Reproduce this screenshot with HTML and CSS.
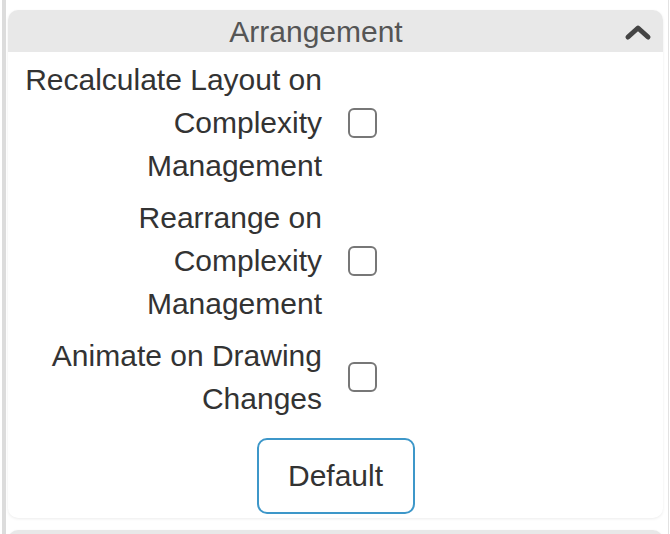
FILE: index.html
```html
<!DOCTYPE html>
<html>
<head>
<meta charset="utf-8">
<link rel="stylesheet" href="styles.css">
</head>
<body>
<div class="frame">
  <div class="card">
    <div class="card-header">
      <span class="title">Arrangement</span>
      <span class="toggle">
        <svg class="chevron" width="28" height="18" viewBox="0 0 28 18"><polyline points="4,14 14,5 24,14" fill="none" stroke="#444" stroke-width="5" stroke-linecap="round" stroke-linejoin="round"/></svg>
      </span>
    </div>
    <div class="card-body">
      <div class="row">
        <label class="label">Recalculate Layout on Complexity Management</label>
        <input type="checkbox" class="check">
      </div>
      <div class="row">
        <label class="label">Rearrange on Complexity Management</label>
        <input type="checkbox" class="check">
      </div>
      <div class="row">
        <label class="label">Animate on Drawing Changes</label>
        <input type="checkbox" class="check">
      </div>
      <div class="actions">
        <button class="btn">Default</button>
      </div>
    </div>
  </div>
  <div class="card next">
    <div class="card-header"></div>
  </div>
</div>
</body>
</html>
```

FILE: styles.css
```css
html, body {
  margin: 0;
  padding: 0;
  background: #fff;
  overflow: hidden;
}
body {
  font-family: "Liberation Sans", Arial, Helvetica, sans-serif;
  color: #333;
}
.frame {
  box-sizing: border-box;
  height: 534px;
  margin: 0 1px 0 2px;
  border-left: 4px solid #dcdcdc;
  border-right: 1px solid #e2e2e2;
  padding: 10px 5px 0 2px;
  overflow: hidden;
}
.card {
  background: #fff;
  border-radius: 10px;
  box-shadow: 0 1px 3px rgba(0, 0, 0, 0.08);
}
.card-header {
  height: 42px;
  background: #e8e8e8;
  border-radius: 10px 10px 0 0;
  display: flex;
  align-items: center;
}
.title {
  flex: 1;
  text-align: center;
  font-size: 30px;
  line-height: 42px;
  padding-top: 1px;
  color: #555;
}
.toggle {
  width: 39px;
  height: 42px;
  display: flex;
  align-items: center;
  justify-content: flex-start;
}
.chevron {
  display: block;
  margin-left: 0;
  margin-top: 2px;
}
.card-body {
  padding: 6px 0 4px 0;
  display: flex;
  flex-direction: column;
  gap: 9px;
}
.row {
  display: flex;
  align-items: center;
}
.label {
  box-sizing: border-box;
  width: 314px;
  padding-left: 14px;
  text-align: right;
  font-size: 30px;
  line-height: 43px;
  color: #333;
}
.check {
  appearance: none;
  -webkit-appearance: none;
  box-sizing: border-box;
  width: 29px;
  height: 30px;
  margin: 0 0 0 26px;
  border: 2px solid #777;
  border-radius: 6px;
  background: #fff;
}
.actions {
  display: flex;
  justify-content: center;
  margin-top: 9px;
}
.btn {
  box-sizing: border-box;
  width: 158px;
  height: 76px;
  border: 2px solid #3d97c9;
  border-radius: 10px;
  background: #fff;
  font-family: "Liberation Sans", Arial, Helvetica, sans-serif;
  font-size: 30px;
  color: #333;
  padding: 0;
}
.next {
  margin-top: 12px;
}
```
